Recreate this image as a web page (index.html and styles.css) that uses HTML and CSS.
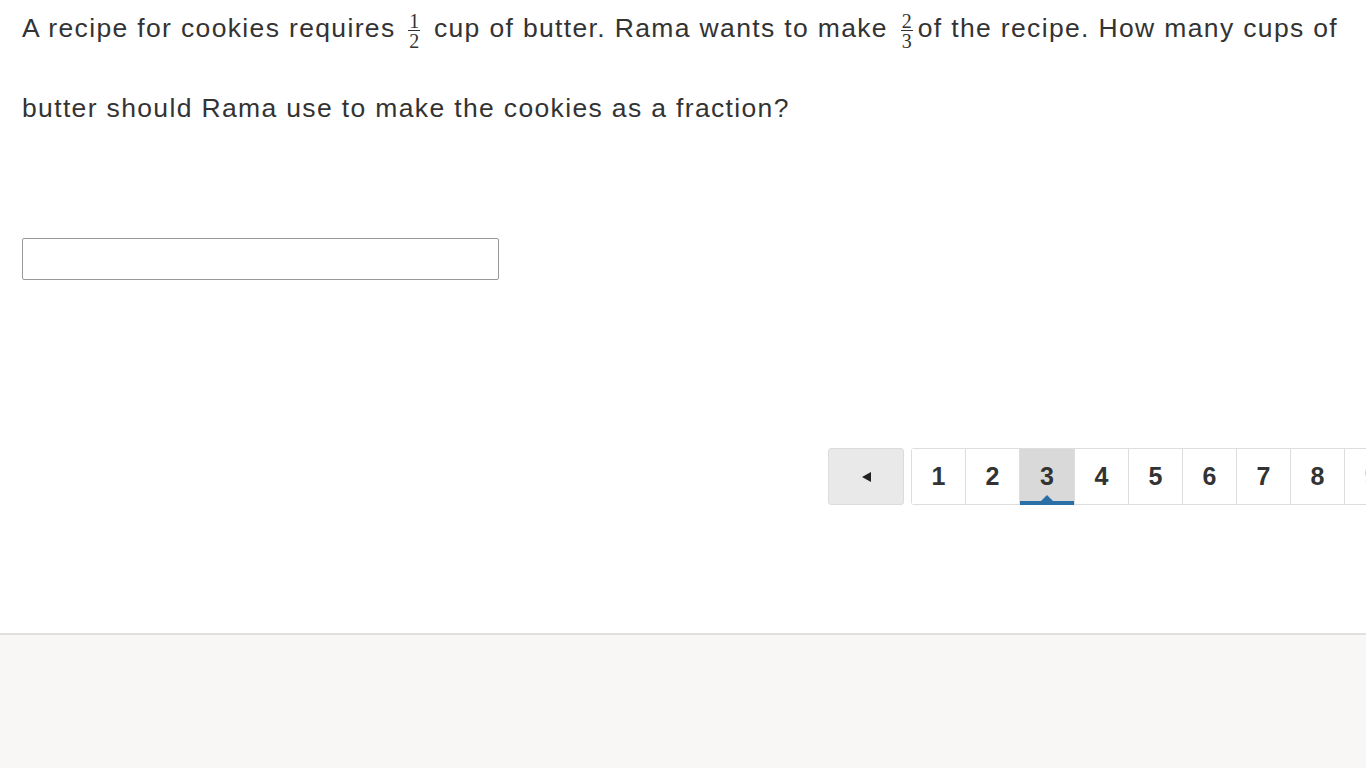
FILE: index.html
```html
<!DOCTYPE html>
<html>
<head>
<meta charset="utf-8">
<link rel="stylesheet" href="styles.css">
</head>
<body>
<div class="main">
  <p class="question">A recipe for cookies requires <span class="frac"><span class="num">1</span><span class="den">2</span></span> cup of butter. Rama wants to make <span class="frac"><span class="num">2</span><span class="den">3</span></span>of the recipe. How many cups of butter should Rama use to make the cookies as a fraction?</p>
  <div class="answer"><input class="answer-input" type="text"></div>
  <div class="pager">
    <button class="prev"><span class="tri"></span></button>
    <div class="pages">
      <div class="pg">1</div>
      <div class="pg">2</div>
      <div class="pg active">3</div>
      <div class="pg">4</div>
      <div class="pg">5</div>
      <div class="pg">6</div>
      <div class="pg">7</div>
      <div class="pg">8</div>
      <div class="pg flagged">9</div>
    </div>
  </div>
</div>
</body>
</html>
```
FILE: styles.css
```css
html, body {
  margin: 0;
  padding: 0;
  background: #f8f7f6;
  overflow: hidden;
}
.main {
  background: #fff;
  height: 633px;
  border-bottom: 2px solid #e0e0e0;
  overflow: hidden;
  font-family: "Liberation Sans", Arial, sans-serif;
  color: #333;
}
.question {
  margin: -12px 0 0 0;
  padding: 0 22px;
  font-size: 26.5px;
  letter-spacing: 1.35px;
  line-height: 80px;
}
.frac {
  display: inline-flex;
  flex-direction: column;
  align-items: center;
  vertical-align: middle;
  font-family: "Liberation Serif", "DejaVu Serif", serif;
  font-size: 20px;
  letter-spacing: 0;
  margin: 0 5px 0 4px;
}
.num {
  display: block;
  border-bottom: 1px solid #333;
  padding: 0 1px;
  line-height: 18px;
  height: 18px;
}
.den {
  display: block;
  line-height: 20px;
  height: 18px;
}
.answer {
  padding: 90px 22px 0;
}
.answer-input {
  display: block;
  box-sizing: border-box;
  width: 477px;
  height: 42px;
  border: 1px solid #999;
  border-radius: 2px;
  margin: 0;
  padding: 0 8px;
  font-size: 18px;
  background: #fff;
}
.pager {
  display: flex;
  margin-top: 168px;
  padding-left: 828px;
  gap: 7px;
  width: 700px;
}
.prev {
  flex: none;
  box-sizing: border-box;
  width: 76px;
  height: 57px;
  background: #e9e9e9;
  border: 1px solid #dcdcdc;
  border-radius: 3px;
  display: flex;
  align-items: center;
  justify-content: center;
  padding: 0;
}
.tri {
  width: 0;
  height: 0;
  border-top: 5px solid transparent;
  border-bottom: 5px solid transparent;
  border-right: 9px solid #222;
}
.pages {
  display: flex;
  flex: none;
  border: 1px solid #ddd;
  border-radius: 3px;
  height: 55px;
}
.pg {
  position: relative;
  box-sizing: border-box;
  width: 54px;
  height: 55px;
  border-right: 1px solid #ddd;
  display: flex;
  align-items: center;
  justify-content: center;
  font-weight: bold;
  font-size: 25px;
  color: #333;
  background: #fff;
}
.pg.active {
  background: #d9d9d9;
  width: 55px;
}
.pg.active::after {
  content: "";
  position: absolute;
  left: 0;
  right: 0;
  bottom: -1px;
  height: 4px;
  background: #2a6fa6;
}
.pg.active::before {
  content: "";
  position: absolute;
  left: 50%;
  bottom: 3px;
  margin-left: -6px;
  border-left: 6px solid transparent;
  border-right: 6px solid transparent;
  border-bottom: 6px solid #2a6fa6;
}
.pg.flagged {
  color: #f2c94c;
}
```
